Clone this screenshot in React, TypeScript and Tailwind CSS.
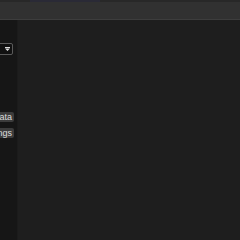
import React from "react";

export default function App() {
  return (
    <div className="w-[240px] h-[240px] flex flex-col bg-[#1e1e1e] overflow-hidden" style={{ fontFamily: '"Liberation Sans", Arial, sans-serif' }}>
      <div className="h-[2px] bg-[#282828] flex">
        <div className="ml-[30px] w-[70px] bg-[#2a2a36]" />
      </div>
      <div className="h-[18px] bg-[#313131] border-b border-[#3d3d3d]" />
      <div className="flex flex-1 min-h-0">
        <div className="w-[18px] bg-[#161616] border-r border-[#1b1b1b] flex flex-col items-end overflow-hidden">
          <div className="mt-[23px] h-[12px] w-[60px] shrink-0 flex items-center justify-end bg-[#111] border border-[#5a5a5a] rounded-[2px] pr-[2px] mr-[4px]">
            <svg width="5" height="4" viewBox="0 0 5 4"><path d="M0 0h5v1H0z M0 1.5h5L2.5 4z" fill="#ddd" /></svg>
          </div>
          <div className="mt-[57px] h-[10px] shrink-0 flex items-center justify-end bg-[#3c3c3c] rounded-[2px] px-[2px] mr-[3px] text-[9px] leading-none text-[#ddd] whitespace-nowrap">
            Data
          </div>
          <div className="mt-[6px] h-[10px] shrink-0 flex items-center justify-end bg-[#3c3c3c] rounded-[2px] px-[2px] mr-[3px] text-[9px] leading-none text-[#ddd] whitespace-nowrap">
            Settings
          </div>
        </div>
        <div className="flex-1 bg-[#1e1e1e]" />
      </div>
    </div>
  );
}
